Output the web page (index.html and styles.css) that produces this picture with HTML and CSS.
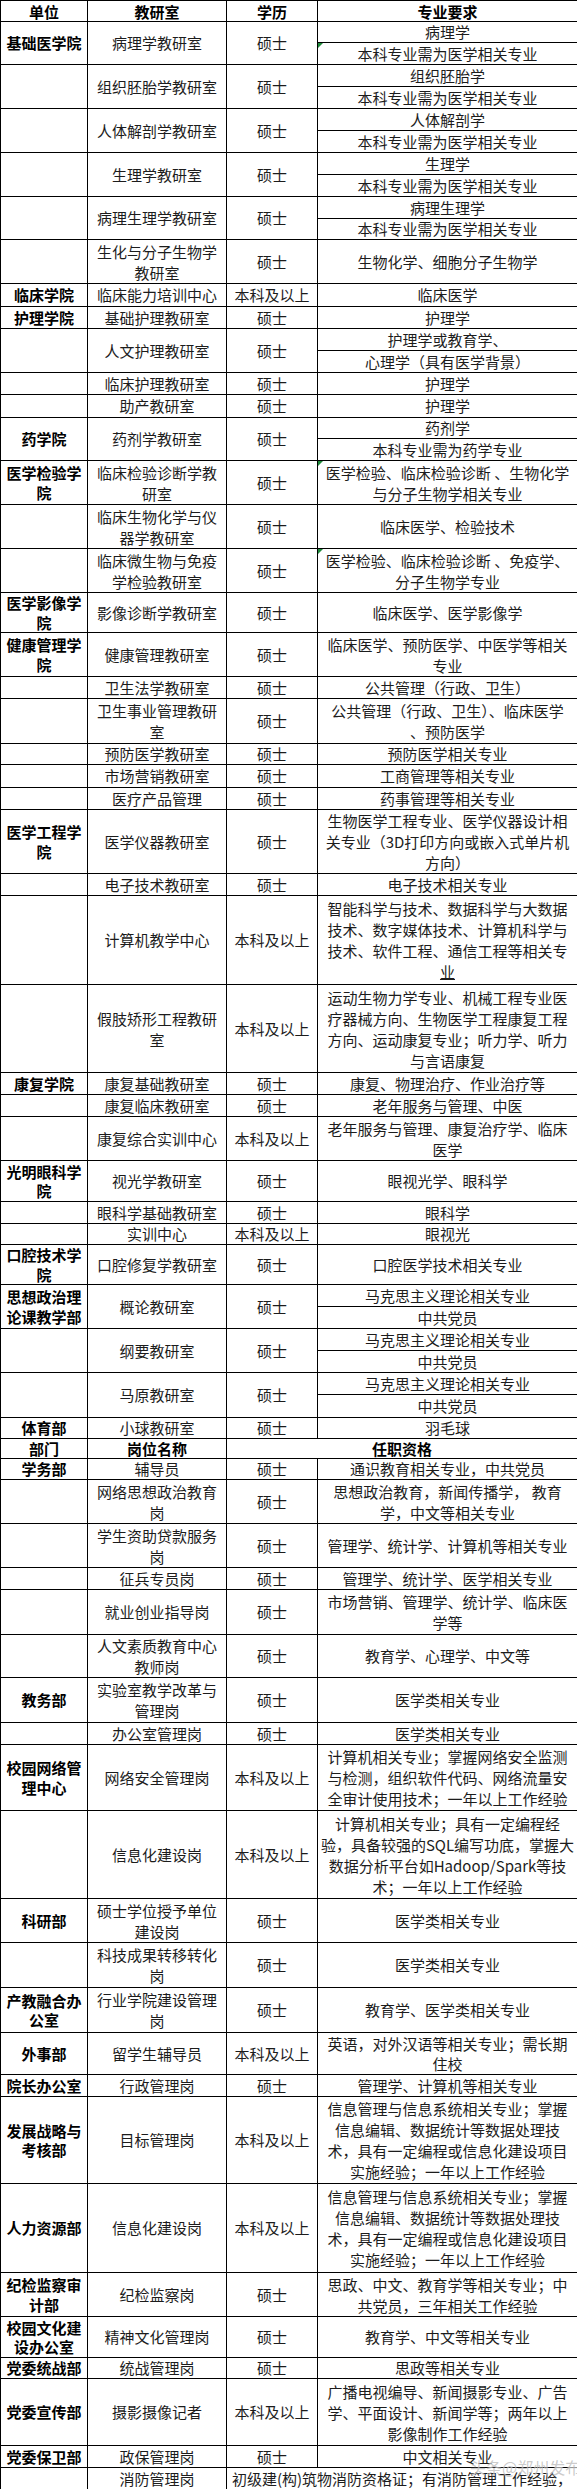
FILE: index.html
```html
<!DOCTYPE html>
<html lang="zh-CN">
<head>
<meta charset="utf-8">
<title>招聘岗位表</title>
<link rel="stylesheet" href="styles.css">
</head>
<body>
<div class="page">
<table class="grid">
<colgroup><col class="c1"><col class="c2"><col class="c3"><col class="c4"></colgroup>
<tr class="h21 head"><th>单位</th><th>教研室</th><th>学历</th><th>专业要求</th></tr>

<tr class="h21"><td class="u" rowspan="2">基础医学院</td><td rowspan="2">病理学教研室</td><td rowspan="2">硕士</td><td>病理学</td></tr>
<tr class="h22"><td class="flag">本科专业需为医学相关专业</td></tr>
<tr class="h22"><td class="u" rowspan="2"></td><td rowspan="2">组织胚胎学教研室</td><td rowspan="2">硕士</td><td>组织胚胎学</td></tr>
<tr class="h22"><td>本科专业需为医学相关专业</td></tr>
<tr class="h22"><td class="u" rowspan="2"></td><td rowspan="2">人体解剖学教研室</td><td rowspan="2">硕士</td><td>人体解剖学</td></tr>
<tr class="h22"><td>本科专业需为医学相关专业</td></tr>
<tr class="h22"><td class="u" rowspan="2"></td><td rowspan="2">生理学教研室</td><td rowspan="2">硕士</td><td>生理学</td></tr>
<tr class="h22"><td>本科专业需为医学相关专业</td></tr>
<tr class="h22"><td class="u" rowspan="2"></td><td rowspan="2">病理生理学教研室</td><td rowspan="2">硕士</td><td>病理生理学</td></tr>
<tr class="h21"><td>本科专业需为医学相关专业</td></tr>
<tr class="h44"><td class="u"></td><td class="m">生化与分子生物学<br>教研室</td><td>硕士</td><td>生物化学、细胞分子生物学</td></tr>
<tr class="h23"><td class="u">临床学院</td><td>临床能力培训中心</td><td>本科及以上</td><td>临床医学</td></tr>
<tr class="h22"><td class="u">护理学院</td><td>基础护理教研室</td><td>硕士</td><td>护理学</td></tr>
<tr class="h22"><td class="u" rowspan="2"></td><td rowspan="2">人文护理教研室</td><td rowspan="2">硕士</td><td>护理学或教育学、</td></tr>
<tr class="h22"><td>心理学（具有医学背景）</td></tr>
<tr class="h22"><td class="u"></td><td>临床护理教研室</td><td>硕士</td><td>护理学</td></tr>
<tr class="h23"><td class="u"></td><td>助产教研室</td><td>硕士</td><td>护理学</td></tr>
<tr class="h21"><td class="u" rowspan="2">药学院</td><td rowspan="2">药剂学教研室</td><td rowspan="2">硕士</td><td>药剂学</td></tr>
<tr class="h22"><td>本科专业需为药学专业</td></tr>
<tr class="h44"><td class="u">医学检验学<br>院</td><td class="m">临床检验诊断学教<br>研室</td><td>硕士</td><td class="m flag">医学检验、临床检验诊断 、生物化学<br>与分子生物学相关专业</td></tr>
<tr class="h44"><td class="u"></td><td class="m">临床生物化学与仪<br>器学教研室</td><td>硕士</td><td>临床医学、检验技术</td></tr>
<tr class="h44"><td class="u"></td><td class="m">临床微生物与免疫<br>学检验教研室</td><td>硕士</td><td class="m flag">医学检验、临床检验诊断 、免疫学、<br>分子生物学专业</td></tr>
<tr class="h40"><td class="u">医学影像学<br>院</td><td>影像诊断学教研室</td><td>硕士</td><td>临床医学、医学影像学</td></tr>
<tr class="h44"><td class="u">健康管理学<br>院</td><td>健康管理教研室</td><td>硕士</td><td class="m">临床医学、预防医学、中医学等相关<br>专业</td></tr>
<tr class="h22"><td class="u"></td><td>卫生法学教研室</td><td>硕士</td><td>公共管理（行政、卫生）</td></tr>
<tr class="h45"><td class="u"></td><td class="m">卫生事业管理教研<br>室</td><td>硕士</td><td class="m">公共管理（行政、卫生）、临床医学<br>、预防医学</td></tr>
<tr class="h21"><td class="u"></td><td>预防医学教研室</td><td>硕士</td><td>预防医学相关专业</td></tr>
<tr class="h23"><td class="u"></td><td>市场营销教研室</td><td>硕士</td><td>工商管理等相关专业</td></tr>
<tr class="h22"><td class="u"></td><td>医疗产品管理</td><td>硕士</td><td>药事管理等相关专业</td></tr>
<tr class="h64"><td class="u">医学工程学<br>院</td><td>医学仪器教研室</td><td>硕士</td><td class="m">生物医学工程专业、医学仪器设计相<br>关专业（3D打印方向或嵌入式单片机<br>方向）</td></tr>
<tr class="h22"><td class="u"></td><td>电子技术教研室</td><td>硕士</td><td>电子技术相关专业</td></tr>
<tr class="h89"><td class="u"></td><td>计算机教学中心</td><td>本科及以上</td><td class="m">智能科学与技术、数据科学与大数据<br>技术、数字媒体技术、计算机科学与<br>技术、软件工程、通信工程等相关专<br><span class="ul">业</span></td></tr>
<tr class="h88"><td class="u"></td><td class="m">假肢矫形工程教研<br>室</td><td>本科及以上</td><td class="m">运动生物力学专业、机械工程专业医<br>疗器械方向、生物医学工程康复工程<br>方向、运动康复专业；听力学、听力<br>与言语康复</td></tr>
<tr class="h22"><td class="u">康复学院</td><td>康复基础教研室</td><td>硕士</td><td>康复、物理治疗、作业治疗等</td></tr>
<tr class="h22"><td class="u"></td><td>康复临床教研室</td><td>硕士</td><td>老年服务与管理、中医</td></tr>
<tr class="h44"><td class="u"></td><td>康复综合实训中心</td><td>本科及以上</td><td class="m">老年服务与管理、康复治疗学、临床<br>医学</td></tr>
<tr class="h41"><td class="u">光明眼科学<br>院</td><td>视光学教研室</td><td>硕士</td><td>眼视光学、眼科学</td></tr>
<tr class="h22"><td class="u"></td><td>眼科学基础教研室</td><td>硕士</td><td>眼科学</td></tr>
<tr class="h21"><td class="u"></td><td>实训中心</td><td>本科及以上</td><td>眼视光</td></tr>
<tr class="h40"><td class="u">口腔技术学<br>院</td><td>口腔修复学教研室</td><td>硕士</td><td>口腔医学技术相关专业</td></tr>
<tr class="h22"><td class="u" rowspan="2">思想政治理<br>论课教学部</td><td rowspan="2">概论教研室</td><td rowspan="2">硕士</td><td>马克思主义理论相关专业</td></tr>
<tr class="h22"><td>中共党员</td></tr>
<tr class="h22"><td class="u" rowspan="2"></td><td rowspan="2">纲要教研室</td><td rowspan="2">硕士</td><td>马克思主义理论相关专业</td></tr>
<tr class="h22"><td>中共党员</td></tr>
<tr class="h22"><td class="u" rowspan="2"></td><td rowspan="2">马原教研室</td><td rowspan="2">硕士</td><td>马克思主义理论相关专业</td></tr>
<tr class="h23"><td>中共党员</td></tr>
<tr class="h21"><td class="u">体育部</td><td>小球教研室</td><td>硕士</td><td>羽毛球</td></tr>

<tr class="h20 head"><th>部门</th><th>岗位名称</th><th colspan="2">任职资格</th></tr>
<tr class="h21"><td class="u">学务部</td><td>辅导员</td><td>硕士</td><td>通识教育相关专业，中共党员</td></tr>
<tr class="h44"><td class="u"></td><td class="m">网络思想政治教育<br>岗</td><td>硕士</td><td class="m">思想政治教育，新闻传播学， 教育<br>学，中文等相关专业</td></tr>
<tr class="h44"><td class="u"></td><td class="m">学生资助贷款服务<br>岗</td><td>硕士</td><td>管理学、统计学、计算机等相关专业</td></tr>
<tr class="h22"><td class="u"></td><td>征兵专员岗</td><td>硕士</td><td>管理学、统计学、医学相关专业</td></tr>
<tr class="h45"><td class="u"></td><td>就业创业指导岗</td><td>硕士</td><td class="m">市场营销、管理学、统计学、临床医<br>学等</td></tr>
<tr class="h43"><td class="u"></td><td class="m">人文素质教育中心<br>教师岗</td><td>硕士</td><td>教育学、心理学、中文等</td></tr>
<tr class="h45"><td class="u">教务部</td><td class="m">实验室教学改革与<br>管理岗</td><td>硕士</td><td>医学类相关专业</td></tr>
<tr class="h22"><td class="u"></td><td>办公室管理岗</td><td>硕士</td><td>医学类相关专业</td></tr>
<tr class="h66"><td class="u">校园网络管<br>理中心</td><td>网络安全管理岗</td><td>本科及以上</td><td class="m">计算机相关专业；掌握网络安全监测<br>与检测，组织软件代码、网络流量安<br>全审计使用技术；一年以上工作经验</td></tr>
<tr class="h88"><td class="u"></td><td>信息化建设岗</td><td>本科及以上</td><td class="m">计算机相关专业；具有一定编程经<br>验，具备较强的SQL编写功底，掌握大<br>数据分析平台如Hadoop/Spark等技<br>术；一年以上工作经验</td></tr>
<tr class="h44"><td class="u">科研部</td><td class="m">硕士学位授予单位<br>建设岗</td><td>硕士</td><td>医学类相关专业</td></tr>
<tr class="h45"><td class="u"></td><td class="m">科技成果转移转化<br>岗</td><td>硕士</td><td>医学类相关专业</td></tr>
<tr class="h45"><td class="u">产教融合办<br>公室</td><td class="m">行业学院建设管理<br>岗</td><td>硕士</td><td>教育学、医学类相关专业</td></tr>
<tr class="h42"><td class="u">外事部</td><td>留学生辅导员</td><td>本科及以上</td><td>英语，对外汉语等相关专业；需长期<br>住校</td></tr>
<tr class="h22"><td class="u">院长办公室</td><td>行政管理岗</td><td>硕士</td><td>管理学、计算机等相关专业</td></tr>
<tr class="h87"><td class="u">发展战略与<br>考核部</td><td>目标管理岗</td><td>本科及以上</td><td class="m">信息管理与信息系统相关专业；掌握<br>信息编辑、数据统计等数据处理技<br>术，具有一定编程或信息化建设项目<br>实施经验；一年以上工作经验</td></tr>
<tr class="h89"><td class="u">人力资源部</td><td>信息化建设岗</td><td>本科及以上</td><td class="m">信息管理与信息系统相关专业；掌握<br>信息编辑、数据统计等数据处理技<br>术，具有一定编程或信息化建设项目<br>实施经验；一年以上工作经验</td></tr>
<tr class="h44"><td class="u">纪检监察审<br>计部</td><td>纪检监察岗</td><td>硕士</td><td class="m">思政、中文、教育学等相关专业；中<br>共党员，三年相关工作经验</td></tr>
<tr class="h41"><td class="u">校园文化建<br>设办公室</td><td>精神文化管理岗</td><td>硕士</td><td>教育学、中文等相关专业</td></tr>
<tr class="h21"><td class="u">党委统战部</td><td>统战管理岗</td><td>硕士</td><td>思政等相关专业</td></tr>
<tr class="h67"><td class="u">党委宣传部</td><td>摄影摄像记者</td><td>本科及以上</td><td class="m">广播电视编导、新闻摄影专业、广告<br>学、平面设计、新闻学等；两年以上<br>影像制作工作经验</td></tr>
<tr class="h22"><td class="u">党委保卫部</td><td>政保管理岗</td><td>硕士</td><td>中文相关专业</td></tr>
<tr class="h23 last"><td class="u"></td><td>消防管理岗</td><td colspan="2">初级建(构)筑物消防资格证；有消防管理工作经验，</td></tr>
</table>
<div class="mark">头条@郑州发布</div>
</div>
</body>
</html>
```

FILE: styles.css
```css
html, body {
  margin: 0;
  padding: 0;
  background: #fff;
}

.page {
  position: relative;
  width: 577px;
  overflow: hidden;
}

.grid {
  width: 577px;
  border-collapse: collapse;
  table-layout: fixed;
  font-family: "Noto Sans CJK SC", "Microsoft YaHei", "Noto Sans", sans-serif;
  font-size: 15px;
  color: #1c1c1c;
}

.c1 { width: 87px; }
.c2 { width: 139px; }
.c3 { width: 91px; }
.c4 { width: 260px; }

.grid th,
.grid td {
  border: 1px solid #000;
  padding: 0;
  text-align: center;
  vertical-align: middle;
  white-space: nowrap;
  line-height: 20px;
  overflow: visible;
}

.grid th {
  font-weight: 700;
  color: #000;
  line-height: 19px;
}

.grid td.u {
  font-weight: 700;
  color: #000;
  line-height: 19.5px;
}

.grid td.m {
  line-height: 21px;
}

.flag {
  position: relative;
}

.flag::before {
  content: "";
  position: absolute;
  left: 0;
  top: 0;
  width: 0;
  height: 0;
  border-top: 5px solid #1f8a3b;
  border-right: 5px solid transparent;
}

.ul {
  text-decoration: underline;
}

.last td {
  border-bottom: none;
}

.h20 { height: 20px; }
.h21 { height: 21px; }
.h22 { height: 22px; }
.h23 { height: 23px; }
.h40 { height: 40px; }
.h41 { height: 41px; }
.h42 { height: 42px; }
.h43 { height: 43px; }
.h44 { height: 44px; }
.h45 { height: 45px; }
.h64 { height: 64px; }
.h66 { height: 66px; }
.h67 { height: 67px; }
.h87 { height: 87px; }
.h88 { height: 88px; }
.h89 { height: 89px; }

.mark {
  position: absolute;
  left: 470px;
  top: 2455px;
  font-family: "Noto Sans CJK SC", "Noto Sans", sans-serif;
  font-size: 16px;
  color: rgba(120, 120, 120, 0.4);
  text-shadow: 0 0 1px rgba(255, 255, 255, 0.8);
  white-space: nowrap;
}
```
